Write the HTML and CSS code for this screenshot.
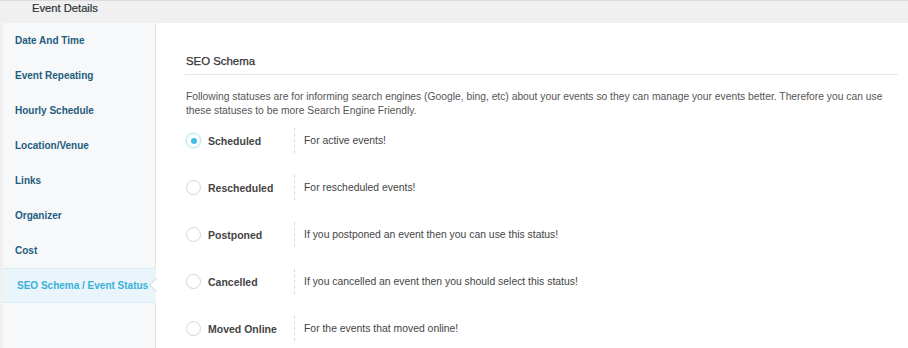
FILE: index.html
```html
<!DOCTYPE html>
<html>
<head>
  <title>Event Details</title>
  <link rel="stylesheet" href="styles.css">
</head>
<body>
  <div class="panel">
    <div class="panel-head">Event Details</div>
    <div class="panel-body">
      <ul class="tabs">
        <li class="tab">Date And Time</li>
        <li class="tab">Event Repeating</li>
        <li class="tab">Hourly Schedule</li>
        <li class="tab">Location/Venue</li>
        <li class="tab">Links</li>
        <li class="tab">Organizer</li>
        <li class="tab">Cost</li>
        <li class="tab active">SEO Schema / Event Status</li>
      </ul>
      <div class="content">
        <h3 class="section-title">SEO Schema</h3>
        <p class="section-desc">Following statuses are for informing search engines (Google, bing, etc) about your events so they can manage your events better. Therefore you can use these statuses to be more Search Engine Friendly.</p>
        <div class="status-list">
          <label class="status">
            <span class="radio checked"></span>
            <span class="status-name">Scheduled</span>
            <span class="status-help">For active events!</span>
          </label>
          <label class="status">
            <span class="radio"></span>
            <span class="status-name">Rescheduled</span>
            <span class="status-help">For rescheduled events!</span>
          </label>
          <label class="status">
            <span class="radio"></span>
            <span class="status-name">Postponed</span>
            <span class="status-help">If you postponed an event then you can use this status!</span>
          </label>
          <label class="status">
            <span class="radio"></span>
            <span class="status-name">Cancelled</span>
            <span class="status-help">If you cancelled an event then you should select this status!</span>
          </label>
          <label class="status">
            <span class="radio"></span>
            <span class="status-name">Moved Online</span>
            <span class="status-help">For the events that moved online!</span>
          </label>
        </div>
      </div>
    </div>
  </div>
</body>
</html>
```

FILE: styles.css
```css
:root {
  --head-bg: #f0f0f1;
  --side-bg: #f7f8fa;
  --border: #e3e4e6;
  --tab-text: #1f5d7e;
  --tab-active: #38b1d8;
  --tab-active-bg: #eaf5fb;
  --text: #444;
  --muted: #555;
}

body {
  margin: 0;
  width: 908px;
  height: 348px;
  overflow: hidden;
  background: #fff;
  font-family: 'Liberation Sans', Arial, sans-serif;
  color: var(--text);
}

.panel {
  border-top: 1px solid #dcdcde;
  background: var(--head-bg);
  padding-left: 3px;
  height: 347px;
  display: flex;
  flex-direction: column;
}

.panel-head {
  height: 22px;
  padding-left: 29px;
  font-size: 11.2px;
  color: #2c3338;
  line-height: 14px;
  -webkit-text-stroke: 0.2px #2c3338;
}

.panel-body {
  flex: 1;
  display: flex;
  background: #fff;
}

.tabs {
  list-style: none;
  margin: 0;
  padding: 0;
  width: 152px;
  background: var(--side-bg);
  border-right: 1px solid var(--border);
}

.tab {
  height: 35px;
  line-height: 35px;
  padding-left: 12px;
  font-size: 10px;
  font-weight: bold;
  color: var(--tab-text);
  white-space: nowrap;
}

.tab.active {
  position: relative;
  height: 33px;
  line-height: 33px;
  padding-left: 14px;
  margin-right: -1px;
  color: var(--tab-active);
  background: var(--tab-active-bg);
  border-top: 1px solid #d9ecf5;
  border-bottom: 1px solid #d9ecf5;
}

.tab.active::after {
  content: '';
  position: absolute;
  right: -5px;
  top: 11px;
  width: 9px;
  height: 9px;
  background: #fff;
  border-left: 1px solid #d0dde4;
  border-bottom: 1px solid #d0dde4;
  transform: rotate(45deg);
}

.content {
  flex: 1;
  padding: 32px 10px 0 29px;
}

.section-title {
  margin: 0;
  padding: 0 0 7px 1px;
  font-size: 11.4px;
  font-weight: normal;
  color: #333;
  -webkit-text-stroke: 0.25px #333;
  border-bottom: 1px solid #e6e6e6;
}

.section-desc {
  margin: 15px 0 10px 1px;
  font-size: 10.3px;
  line-height: 14px;
  color: var(--muted);
}

.status-list {
  display: flex;
  flex-direction: column;
  gap: 22px;
}

.status {
  display: flex;
  align-items: center;
  height: 25px;
}

.radio {
  width: 15px;
  height: 15px;
  border: 1px solid #d5d5d5;
  border-radius: 50%;
  box-sizing: border-box;
  margin-left: 1px;
  position: relative;
}

.radio.checked {
  border-color: #bfe6f2;
  box-shadow: 0 0 0 1px #e4f5fa;
}

.radio.checked::after {
  content: '';
  position: absolute;
  left: 3.5px;
  top: 3.5px;
  width: 6px;
  height: 6px;
  border-radius: 50%;
  background: #3fc0e0;
}

.status-name {
  width: 86px;
  margin-left: 7px;
  font-size: 10.5px;
  font-weight: bold;
  color: var(--text);
}

.status-help {
  height: 25px;
  line-height: 25px;
  padding-left: 9px;
  border-left: 1px dashed #d8d8d8;
  font-size: 10.4px;
  color: var(--text);
}
```
